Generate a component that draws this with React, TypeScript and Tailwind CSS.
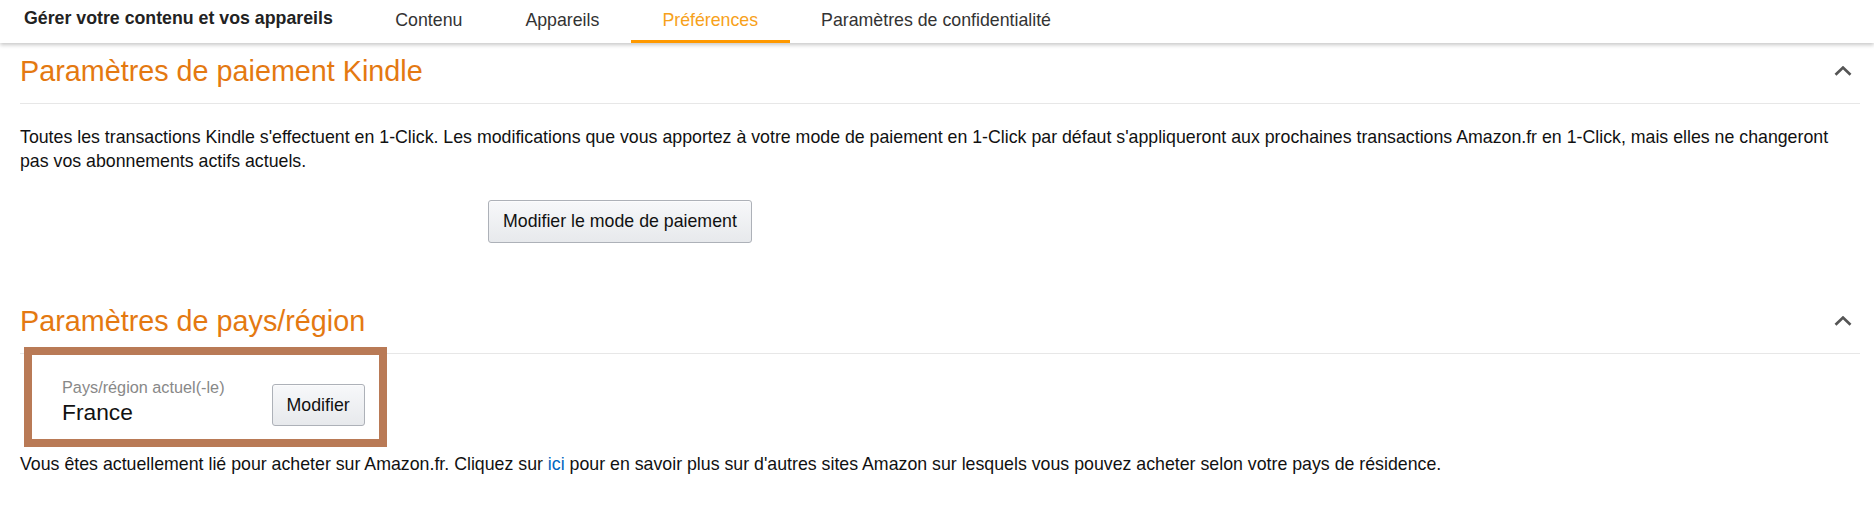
import React from "react";

const tabs = [
  { label: "Contenu", active: false },
  { label: "Appareils", active: false },
  { label: "Préférences", active: true },
  { label: "Paramètres de confidentialité", active: false },
];

const Chevron: React.FC = () => (
  <svg width="18" height="10" viewBox="0 0 18 10" className="mr-[8px] shrink-0">
    <polyline points="1.5,8.8 9,1.6 16.5,8.8" fill="none" stroke="#555" strokeWidth="2.7" />
  </svg>
);

const SectionTitle: React.FC<{ title: string }> = ({ title }) => (
  <div className="flex items-center justify-between pt-[10px] pb-[14px] border-b border-[#e7e7e7]">
    <h2 className="text-[28.75px] leading-[36px] text-[#e47911] font-normal">{title}</h2>
    <Chevron />
  </div>
);

const Button: React.FC<{ children: React.ReactNode; className?: string }> = ({ children, className }) => (
  <button
    className={
      "rounded-[3px] border border-[#adb1b8] bg-gradient-to-b from-[#f7f8fa] to-[#e7e9ec] text-[17.75px] text-[#111] shadow-[inset_0_1px_0_rgba(255,255,255,0.6)] " +
      (className || "")
    }
  >
    {children}
  </button>
);

export default function App() {
  return (
    <div className="min-h-[525px] bg-white font-['Liberation_Sans',Arial,sans-serif] text-[#111]">
      {/* Top navigation */}
      <div className="relative z-10 flex h-[43px] items-start bg-white shadow-[0_2px_4px_rgba(0,0,0,0.22)]">
        <p className="pl-[24px] pt-[8px] text-[17.75px] font-bold leading-[20px] text-[#222]">
          Gérer votre contenu et vos appareils
        </p>
        <div className="ml-[31px] flex h-full">
          {tabs.map((t) => (
            <div
              key={t.label}
              className={
                t.active
                  ? "h-full border-b-[3px] border-[#ff9900] px-[31.5px] pt-[10px] text-[17.75px] leading-[20px] text-[#f7a11a]"
                  : "h-full border-b-[3px] border-transparent px-[31.5px] pt-[10px] text-[17.75px] leading-[20px] text-[#333]"
              }
            >
              {t.label}
            </div>
          ))}
        </div>
      </div>

      <div className="pl-[20px] pr-[14px]">
        {/* Kindle payment */}
        <SectionTitle title="Paramètres de paiement Kindle" />
        <p className="mt-[21px] text-[17.75px] leading-[24px]">
          Toutes les transactions Kindle s'effectuent en 1-Click. Les modifications que vous apportez à votre mode de
          paiement en 1-Click par défaut s'appliqueront aux prochaines transactions Amazon.fr en 1-Click, mais elles ne
          changeront pas vos abonnements actifs actuels.
        </p>
        <Button className="ml-[468px] mt-[27px] h-[43px] px-[14px]">Modifier le mode de paiement</Button>

        {/* Country / region */}
        <div className="mt-[50px]">
          <SectionTitle title="Paramètres de pays/région" />
        </div>
        <div className="relative ml-[4px] mt-[-7px] flex w-fit items-end border-[8px] border-[#b97a56] bg-white pb-[13px] pl-[30px] pr-[14px] pt-[22px]">
          <div>
            <p className="text-[16.25px] leading-[21px] text-[#888]">Pays/région actuel(-le)</p>
            <p className="text-[22.75px] leading-[28px] text-[#111]">France</p>
          </div>
          <Button className="ml-[47px] h-[42px] px-[14px]">Modifier</Button>
        </div>
        <p className="mt-[5px] text-[17.75px] leading-[24px]">
          Vous êtes actuellement lié pour acheter sur Amazon.fr. Cliquez sur{" "}
          <a className="text-[#0066c0]">ici</a> pour en savoir plus sur d'autres sites Amazon sur lesquels vous pouvez
          acheter selon votre pays de résidence.
        </p>
      </div>
    </div>
  );
}
